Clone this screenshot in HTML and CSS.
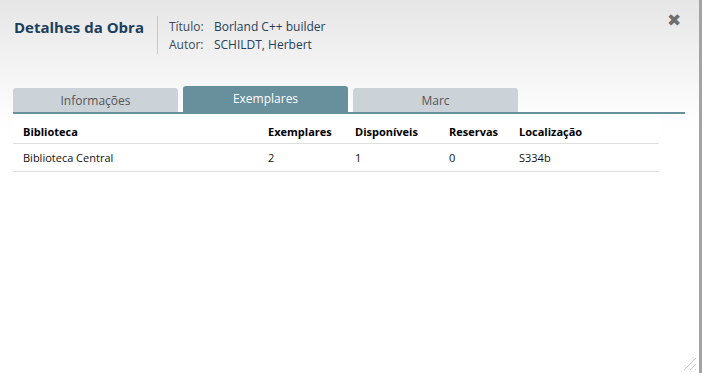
FILE: index.html
```html
<!DOCTYPE html>
<html lang="pt">
<head>
    <meta charset="UTF-8">
    <title>Detalhes da Obra</title>
    <link rel="stylesheet" href="styles.css">
</head>
<body>

<div class="dialog">
    <div class="header">
        <h1>Detalhes da Obra</h1>
        <div class="info">
            <div class="info-row"><span class="label">Título:</span><span>Borland C++ builder</span></div>
            <div class="info-row"><span class="label">Autor:</span><span>SCHILDT, Herbert</span></div>
        </div>
        <span class="close">&#10006;</span>
    </div>

    <div class="tabs">
        <div class="tab">Informações</div>
        <div class="tab active">Exemplares</div>
        <div class="tab">Marc</div>
    </div>

    <table class="copies">
        <thead>
            <tr>
                <th class="col-lib">Biblioteca</th>
                <th class="col-ex">Exemplares</th>
                <th class="col-disp">Disponíveis</th>
                <th class="col-res">Reservas</th>
                <th>Localização</th>
            </tr>
        </thead>
        <tbody>
            <tr>
                <td>Biblioteca Central</td>
                <td>2</td>
                <td>1</td>
                <td>0</td>
                <td>S334b</td>
            </tr>
        </tbody>
    </table>

    <div class="grip"></div>
</div>

</body>
</html>
```

FILE: styles.css
```css
html, body {
    margin: 0;
    padding: 0;
    height: 100%;
}
body {
    font-family: "Open Sans", "Noto Sans", sans-serif;
    background: #fff;
}
.dialog {
    position: relative;
    height: 100%;
    box-sizing: border-box;
    border-right: 3px solid #a3a3a3;
    background: linear-gradient(#e6e6e6 0, #fdfdfd 115px, #fff 140px);
}
.header {
    display: flex;
    align-items: flex-start;
    padding: 16px 0 0 14px;
    height: 70px;
    box-sizing: border-box;
}
.header h1 {
    margin: 0;
    font-size: 15px;
    font-weight: bold;
    color: #1c3e5e;
    line-height: 22px;
}
.info {
    margin-left: 13px;
    border-left: 1px solid #c8c8c8;
    padding: 2px 0 0 11px;
    font-size: 12px;
    color: #24405e;
    line-height: 18px;
    height: 36px;
}
.info-row .label {
    display: inline-block;
    width: 45px;
    color: #3c4a58;
}
.close {
    position: absolute;
    top: 8px;
    right: 18px;
    font-size: 17px;
    color: #6f6f6f;
}
.tabs {
    display: flex;
    gap: 5px;
    align-items: flex-end;
    margin: 16px 14px 0 13px;
    border-bottom: 2px solid #678f9c;
    height: 26px;
}
.tab {
    width: 165px;
    height: 24px;
    line-height: 26px;
    text-align: center;
    font-size: 12px;
    color: #555;
    background: #cbd3d9;
    border-radius: 3px 3px 0 0;
}
.tab.active {
    height: 26px;
    background: #678f9c;
    color: #fff;
}
.copies {
    margin: 0 0 0 13px;
    width: 646px;
    border-collapse: collapse;
    font-size: 11px;
    color: #111;
    background: #fff;
}
.copies th, .copies td {
    text-align: left;
    line-height: 15px;
    padding: 6px 0 6px 10px;
    border-bottom: 1px solid #dedede;
}
.copies th {
    font-weight: bold;
    color: #000;
    padding-top: 10px;
    padding-bottom: 4px;
}
.col-lib { width: 235px; }
.col-ex { width: 77px; }
.col-disp { width: 84px; }
.col-res { width: 60px; }
.grip {
    position: absolute;
    right: 3px;
    bottom: 3px;
    width: 14px;
    height: 14px;
    background: repeating-linear-gradient(135deg, transparent 0 3px, #c8c8c8 3px 4px);
    clip-path: polygon(100% 0, 100% 100%, 0 100%);
}
```
